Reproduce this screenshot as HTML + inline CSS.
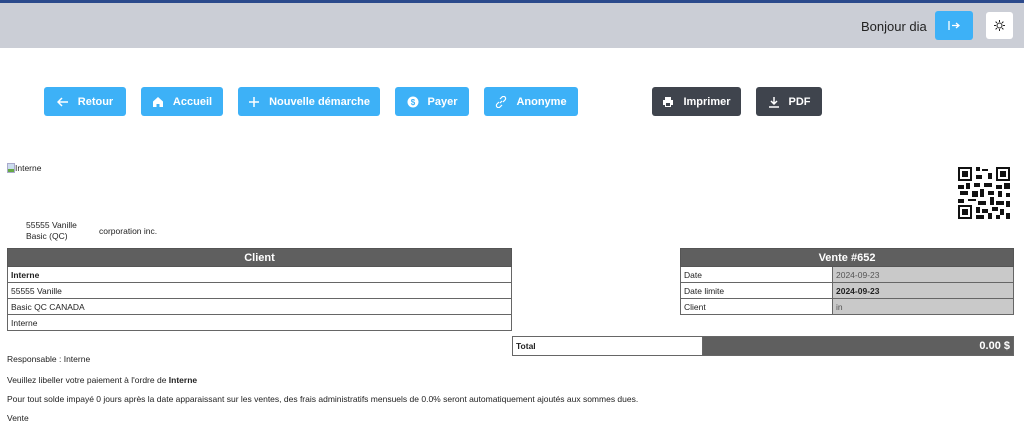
<!DOCTYPE html>
<html><head><meta charset="utf-8"><style>
*{margin:0;padding:0;box-sizing:border-box}
body{width:1024px;height:428px;overflow:hidden;background:#fff;font-family:"Liberation Sans",sans-serif;color:#222;position:relative}
.a{position:absolute}
.top{left:0;top:0;width:1024px;height:48px;background:#cbced6;border-top:3px solid #2b4a8c}
.btn{position:absolute;top:87px;height:29px;border-radius:3px;color:#fff;font-size:11px;font-weight:bold;display:flex;align-items:center;justify-content:center;gap:9px}
.b{background:#3db1f7}.d{background:#3f444d}
.btn svg{width:12px;height:12px}
table{border-collapse:collapse;font-size:8.5px;position:absolute}
td{border:1px solid #666;height:16px;padding:0 3px}
th{background:#5f5f5f;color:#fff;font-size:11px;height:18px;border:1px solid #555}
.t{font-size:8.5px;left:7px}
</style></head><body>
<div class="a top"></div>
<div class="a" style="left:861px;top:19px;font-size:13px;color:#222">Bonjour dia</div>
<div class="a" style="left:935px;top:11px;width:38px;height:29px;background:#3db1f7;border-radius:3px"><svg width="38" height="29"><path d="M14 10v9M17 14.5h7M21 12l3 2.5-3 2.5" stroke="#fff" stroke-width="1.3" fill="none"/></svg></div>
<div class="a" style="left:986px;top:12px;width:27px;height:27px;background:#fff;border-radius:3px"><svg width="27" height="27"><circle cx="13.5" cy="13.5" r="2.5" stroke="#222" fill="none"/><path d="M13.5 8v2M13.5 17v2M8 13.5h2M17 13.5h2M9.6 9.6l1.4 1.4M16 16l1.4 1.4M9.6 17.4l1.4-1.4M16 11l1.4-1.4" stroke="#222"/></svg></div>

<div class="btn b" style="left:44px;width:82px"><svg viewBox="0 0 12 12"><path d="M11 6H1M5 2L1 6l4 4" stroke="#fff" stroke-width="1.5" fill="none"/></svg>Retour</div>
<div class="btn b" style="left:141px;width:82px"><svg viewBox="0 0 12 12"><path d="M6 1L1 5.5V11h3.5V8h3v3H11V5.5z" fill="#fff"/></svg>Accueil</div>
<div class="btn b" style="left:238px;width:142px"><svg viewBox="0 0 12 12"><path d="M6 1v10M1 6h10" stroke="#fff" stroke-width="1.5"/></svg>Nouvelle démarche</div>
<div class="btn b" style="left:395px;width:74px"><svg viewBox="0 0 12 12"><circle cx="6" cy="6" r="5.5" fill="#fff"/><text x="6" y="9" font-size="8" font-weight="bold" fill="#3db1f7" text-anchor="middle" font-family="Liberation Sans">$</text></svg>Payer</div>
<div class="btn b" style="left:484px;width:94px"><svg viewBox="0 0 12 12"><path d="M5 7l2-2M4 6L2 8a2 2 0 003 3l2-2M8 6l2-2a2 2 0 00-3-3L5 3" stroke="#fff" stroke-width="1.2" fill="none"/></svg>Anonyme</div>
<div class="btn d" style="left:652px;width:89px"><svg viewBox="0 0 12 12"><path d="M3 1h6v3H3zM1 4h10v5H9v2H3V9H1z" fill="#fff"/><rect x="4" y="7" width="4" height="3" fill="#3f444d"/></svg>Imprimer</div>
<div class="btn d" style="left:756px;width:66px"><svg viewBox="0 0 12 12"><path d="M6 1v7M3 5l3 3 3-3M1 11h10" stroke="#fff" stroke-width="1.5" fill="none"/></svg>PDF</div>

<div class="a" style="left:7px;top:163px;width:8px;height:10px;border:1px solid #aac;background:linear-gradient(#cde 60%,#6a4 60%)"></div>
<div class="a" style="left:15px;top:163px;font-size:8.5px">Interne</div>
<div class="a" style="left:26px;top:220px;font-size:8.5px;line-height:11px">55555 Vanille<br>Basic (QC)</div>
<div class="a" style="left:99px;top:226px;font-size:8.5px">corporation inc.</div>

<svg class="a" style="left:958px;top:167px" width="52" height="52" viewBox="0 0 26 26">
<g fill="#111"><path d="M0 0h7v7H0zM19 0h7v7h-7zM0 19h7v7H0z"/></g>
<g fill="#fff"><path d="M1 1h5v5H1zM20 1h5v5h-5zM1 20h5v5H1z"/></g>
<g fill="#111"><path d="M2 2h3v3H2zM21 2h3v3h-3zM2 21h3v3H2z"/>
<path d="M9 0h2v2H9zM12 1h3v1h-3zM15 3h2v3h-2zM9 4h3v2H9zM8 8h3v2H8zM0 9h3v2H0zM4 8h2v3H4zM13 8h4v2h-4zM19 9h3v2h-3zM23 8h3v3h-3zM1 12h4v2H1zM7 12h3v3H7zM11 11h2v4h-2zM15 12h3v2h-3zM20 12h2v3h-2zM24 13h2v2h-2zM0 16h3v2H0zM5 16h4v1H5zM10 17h4v2h-4zM16 15h2v4h-2zM19 17h4v2h-4zM24 17h2v3h-2zM9 20h2v3H9zM12 21h3v2h-3zM17 20h3v2h-3zM21 21h2v3h-2zM9 24h4v2H9zM15 23h2v3h-2zM19 24h2v2h-2zM24 23h2v3h-2z"/></g></svg>

<table style="left:7px;top:248px;width:505px">
<tr><th>Client</th></tr>
<tr><td><b>Interne</b></td></tr>
<tr><td>55555 Vanille</td></tr>
<tr><td>Basic QC CANADA</td></tr>
<tr><td>Interne</td></tr>
</table>
<table style="left:680px;top:248px;width:334px">
<tr><th colspan="2">Vente #652</th></tr>
<tr><td style="width:152px">Date</td><td style="background:#c9c9c9;color:#555">2024-09-23</td></tr>
<tr><td>Date limite</td><td style="background:#c9c9c9"><b>2024-09-23</b></td></tr>
<tr><td>Client</td><td style="background:#c9c9c9;color:#555">in</td></tr>
</table>
<table style="left:512px;top:336px;width:502px">
<tr><td style="width:190px;height:19px"><b>Total</b></td><td style="background:#5f5f5f;color:#fff;text-align:right;font-size:11px;font-weight:bold">0.00 $</td></tr>
</table>

<div class="a t" style="top:354px">Responsable : Interne</div>
<div class="a t" style="top:375px">Veuillez libeller votre paiement à l'ordre de <b>Interne</b></div>
<div class="a t" style="top:394px">Pour tout solde impayé 0 jours après la date apparaissant sur les ventes, des frais administratifs mensuels de 0.0% seront automatiquement ajoutés aux sommes dues.</div>
<div class="a t" style="top:413px">Vente</div>
</body></html>
